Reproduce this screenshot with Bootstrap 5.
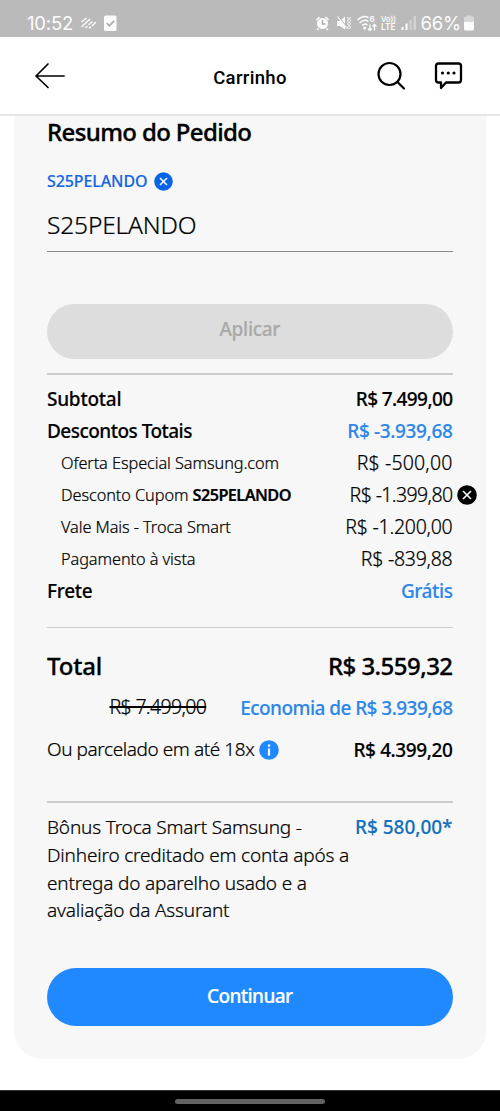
<!DOCTYPE html>
<html lang="pt-BR">
<head>
<meta charset="utf-8">
<meta name="viewport" content="width=device-width, initial-scale=1">
<title>Carrinho</title>
<link href="https://cdn.jsdelivr.net/npm/bootstrap@5.3.0/dist/css/bootstrap.min.css" rel="stylesheet">
<style>
body{font-family:"Noto Sans","Open Sans",sans-serif;color:#000;background:#fff;font-size:19px;height:1111px;overflow:hidden}
svg{display:block;flex:none}
.statusbar{height:37px;background:#bababa;color:#fcfcfc;font-family:Inter,Roboto,sans-serif;padding:8px 26px 0 27px}
.clock{font-size:18.5px;line-height:30px;letter-spacing:-.2px;font-weight:400}
.apphead{height:79px;border-bottom:2px solid #e6e6e6;padding:0 36px 0 34px}
.apptitle{font:500 18.5px/24px Roboto,sans-serif;letter-spacing:.35px;left:0;right:0;top:29px}
.summary{margin:0 14px;height:943px;background:#f7f7f7;border-radius:0 0 28px 28px;padding:0 33.5px 0 33px}
.md{font-weight:500;-webkit-text-stroke:.15px currentColor}
.lt{font-weight:300;-webkit-text-stroke:.22px currentColor}
.heading{font-size:24px;line-height:32px;height:32px;letter-spacing:-.63px;font-weight:500;-webkit-text-stroke:.35px #000}
.chip{height:30px;margin-top:18px;font-size:16px;color:#1467e0;gap:7px;letter-spacing:-.1px}
.field{height:56px;border-bottom:1.5px solid #8a8a8a;font-size:24.5px;line-height:57px;letter-spacing:-.15px}
.pill{border:0;border-radius:29px;font-size:19px;font-weight:500;width:100%;letter-spacing:-.6px;-webkit-text-stroke:.2px currentColor}
.pill.off{height:55px;margin-top:52px;background:#ddd;color:#a9a9a9;letter-spacing:-.3px;padding:0 0 5px}
.pill.go{height:58px;background:#2189ff;color:#fff;padding:0 0 2px}
.rule{height:1.5px;background:#cdcdcd}
.line{height:32px;white-space:nowrap}
.line .lt{font-size:19.5px}
.line>.lt:not(.sub){margin-top:-2px}
.line .sub{font-size:16.3px;padding-left:14px;letter-spacing:-.07px}
.sub .fw-semibold{letter-spacing:-.58px}
.line .lt.parc{font-size:19px;letter-spacing:-.42px}
.bright{color:#2c87e8}
.big{font-size:24px;-webkit-text-stroke:.3px #000}
.note{font-size:19px;line-height:27.8px}
.struck{text-decoration:line-through 1.5px;letter-spacing:-.65px}
.navbar-sys{height:21px;background:#000;border-top:1px solid #333}
.handle{width:150px;height:5px;border-radius:3px;background:#626262}
.a{letter-spacing:-.53px}.b{letter-spacing:-.25px}.c{letter-spacing:-.5px}.d{letter-spacing:-.55px}.e{letter-spacing:-.35px}.f{letter-spacing:-.03px}.g{letter-spacing:-.6px}.h{letter-spacing:.15px}.i{letter-spacing:-.17px}.j{letter-spacing:-.4px}
.xbtn{right:-24.5px;top:5px}
</style>
<script src="https://cdn.jsdelivr.net/npm/bootstrap@5.3.0/dist/js/bootstrap.bundle.min.js"></script>
</head>
<body>
<div class="statusbar d-flex justify-content-between">
  <div class="d-flex">
    <span class="clock">10:52</span>
    <svg class="ms-2" width="16" height="30" viewBox="0 0 16 30" stroke="#fcfcfc" stroke-width="1.5" stroke-linecap="round" fill="none"><path d="M1 13.500L5 10.500M1 18.500L8.500 11.500M5 19.500L6 18.500M8 16.500L11 14M8.500 20L9.500 19M11.500 17.500L14.500 14.500"/></svg>
    <svg style="margin-left:7px" width="13" height="30" viewBox="0 0 13 30"><rect y="7.500" width="12.500" height="15.500" rx="1.500" fill="#fcfcfc"/><path d="M2.800 15l2.500 2.800 4.800-5" stroke="#aaa" stroke-width="1.700" fill="none"/></svg>
  </div>
  <div class="d-flex">
    <svg width="105" height="30" viewBox="0 0 105 30" fill="none" stroke="#fcfcfc" stroke-width="1.500">
      <circle cx="7.500" cy="15.500" r="5.500" fill="#fcfcfc" stroke="none"/><path d="M1.500 12l3-3M13.500 12l-3-3M3.500 20.500l-1.500 1.500M11.500 20.500l1.500 1.500"/><path d="M7.500 12v4h3" stroke="#aaa"/>
      <path d="M22 13h3l5-4.500v13L25 18h-3z" fill="#fcfcfc" stroke="none"/><path d="M23.500 8.500L33 21" stroke="#bababa" stroke-width="1.300"/><path d="M22.500 8.500L32 20.500" stroke-width="1.200"/>
      <path d="M32.500 9l1 1.700-1 1.700 1 1.700-1 1.700 1 1.700-1 1.700 1 1.800M35.500 9l-1 1.700 1 1.700-1 1.700 1 1.700-1 1.700 1 1.700-1 1.800" stroke-width="1"/>
      <path d="M42.500 12q6-5.500 11-2.500M44.500 15q5-4.500 9-1.500M47 17.500q3-2.500 5.500-.5"/><circle cx="49.700" cy="20" r="1.500" fill="#fcfcfc" stroke="none"/>
      <path d="M55 16.500v6M53 20.500l2 2 2-2M59.500 22.500v-6M57.500 18.500l2-2 2 2" stroke-width="1.300"/>
      <g fill="#fcfcfc" stroke="none" font-family="Inter" font-weight="600"><text x="54.500" y="14" font-size="8">6</text><text x="66" y="14" font-size="8" textLength="15" lengthAdjust="spacingAndGlyphs">Vo))</text><text x="66" y="22.300" font-size="8.500" textLength="14.500" lengthAdjust="spacingAndGlyphs">LTE</text>
      <rect x="86.500" y="19" width="2" height="3"/><rect x="90.500" y="15.500" width="2" height="6.500"/><rect x="94.500" y="12" width="2" height="10" opacity=".35"/><rect x="98.500" y="8" width="2.500" height="14" opacity=".35"/></g>
    </svg>
    <span class="clock">66%</span>
    <svg style="margin-left:3px" width="10" height="30" viewBox="0 0 10 30" fill="#fcfcfc"><path d="M0 10q0-1.500 1.500-1.500H3V7.500h4v1h1.500Q10 8.500 10 10v4H0z" opacity=".45"/><path d="M0 14h10v7q0 1.500-1.500 1.500h-7Q0 22.500 0 21z"/></svg>
  </div>
</div>
<header class="apphead position-relative d-flex align-items-center">
  <svg width="32" height="28" viewBox="0 0 32 28" fill="none" stroke="#000" stroke-width="1.700" stroke-linecap="round" stroke-linejoin="round"><path d="M14 2L2 14l12 11.500M2 14h28"/></svg>
  <h1 class="apptitle position-absolute text-center m-0">Carrinho</h1>
  <svg class="ms-auto" width="30" height="30" viewBox="0 0 30 30" fill="none" stroke="#000" stroke-width="2.200" stroke-linecap="round"><circle cx="13.500" cy="13" r="11"/><path d="M21.500 21l6.500 6.500"/></svg>
  <svg style="margin-left:27px;margin-right:1px" width="30" height="30" viewBox="0 0 30 30" fill="none" stroke="#000" stroke-width="2.300" stroke-linejoin="round"><path d="M5.500 2.500h20q2.500 0 2.500 2.500v14q0 2.500-2.500 2.500H13L8 27v-5.500H5.500Q3 21.500 3 19V5q0-2.500 2.500-2.500z"/><g fill="#000" stroke="none"><circle cx="9.500" cy="12" r="1.600"/><circle cx="15.300" cy="12" r="1.600"/><circle cx="21" cy="12" r="1.600"/></g></svg>
</header>
<main class="summary">
  <h2 class="heading m-0">Resumo do Pedido</h2>
  <div class="chip d-flex align-items-center md">S25PELANDO
    <svg width="19" height="19" viewBox="0 0 19 19"><circle cx="9.500" cy="9.500" r="9.300" fill="#0865e8"/><path d="M6 6l7 7M13 6l-7 7" stroke="#fff" stroke-width="1.500"/></svg>
  </div>
  <div class="field lt">S25PELANDO</div>
  <button class="pill off d-block" disabled>Aplicar</button>
  <div class="rule" style="margin:14px 0 9px"></div>
  <div class="line d-flex justify-content-between align-items-center md"><span class="b">Subtotal</span><span class="g">R$ 7.499,00</span></div>
  <div class="line d-flex justify-content-between align-items-center md"><span class="a">Descontos Totais</span><span class="bright e">R$ -3.939,68</span></div>
  <div class="line d-flex justify-content-between align-items-center"><span class="sub lt">Oferta Especial Samsung.com</span><span class="lt h">R$ -500,00</span></div>
  <div class="line d-flex justify-content-between align-items-center position-relative"><span class="sub lt">Desconto Cupom <span class="fw-semibold">S25PELANDO</span></span><span class="lt g">R$ -1.399,80</span>
    <svg class="xbtn position-absolute" width="20" height="20" viewBox="0 0 20 20"><circle cx="10" cy="10" r="9.800"/><path d="M6 6l8 8M14 6l-8 8" stroke="#fff" stroke-width="1.600"/></svg>
  </div>
  <div class="line d-flex justify-content-between align-items-center"><span class="sub lt h">Vale Mais - Troca Smart</span><span class="lt b">R$ -1.200,00</span></div>
  <div class="line d-flex justify-content-between align-items-center"><span class="sub lt">Pagamento à vista</span><span class="lt b">R$ -839,88</span></div>
  <div class="line d-flex justify-content-between align-items-center md"><span class="b">Frete</span><span class="bright j">Grátis</span></div>
  <div class="rule" style="margin:19px 0 20px"></div>
  <div class="line d-flex justify-content-between align-items-center md big" style="height:36px"><span class="i">Total</span><span class="d">R$ 3.559,32</span></div>
  <div class="line d-flex justify-content-end align-items-center" style="height:48px;gap:34px"><span class="lt struck">R$ 7.499,00</span><span class="md bright d">Economia de R$ 3.939,68</span></div>
  <div class="line d-flex align-items-center" style="height:36px"><span class="lt parc">Ou parcelado em até 18x</span>
    <svg style="margin-left:5px" width="20" height="20" viewBox="0 0 20 20"><circle cx="10" cy="10" r="9.800" fill="#2189ff"/><path d="M10 8.500v7M10 4.500v2.300" stroke="#fff" stroke-width="2.200"/></svg>
    <span class="md j ms-auto">R$ 4.399,20</span></div>
  <div class="rule" style="margin:33px 0 11px;height:2px"></div>
  <div class="note d-flex justify-content-between">
    <div class="lt i">Bônus Troca Smart Samsung -<br>Dinheiro creditado em conta após a<br>entrega do aparelho usado e a<br>avaliação da Assurant</div>
    <div class="md f text-nowrap" style="color:#1270bd">R$ 580,00*</div>
  </div>
  <button class="pill go d-block" style="margin-top:43px">Continuar</button>
</main>
<footer class="navbar-sys d-flex justify-content-center align-items-center" style="margin-top:31px"><div class="handle"></div></footer>
</body>
</html>
